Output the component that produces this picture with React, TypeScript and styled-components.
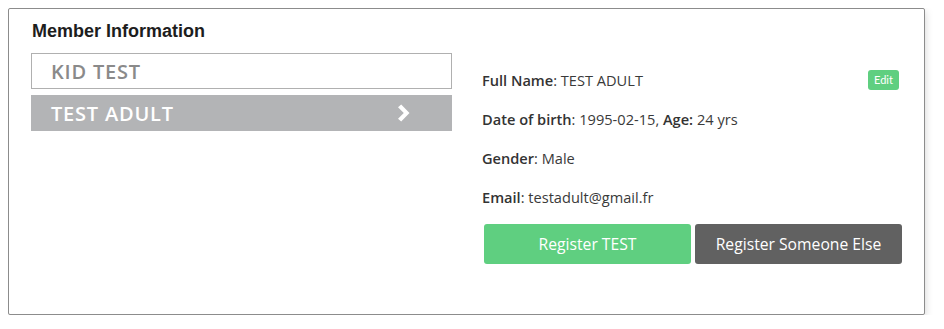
import React from "react"
import styled, { createGlobalStyle } from "styled-components"

const GlobalStyle = createGlobalStyle`
  body {
    margin: 8px;
    background: #fff;
    font-family: "Liberation Sans", Arial, sans-serif;
  }
`

const Card = styled.div`
  width: 917px;
  height: 307px;
  box-sizing: border-box;
  border: 1px solid #8c8c8c;
  border-radius: 2px;
  box-shadow: 0 3px 8px rgba(0, 0, 0, 0.18);
  padding: 12px 23px 0 22px;
  background: #fff;
`

const Title = styled.h2`
  margin: 0 0 11px 1px;
  font-size: 18px;
  line-height: 21px;
  font-weight: bold;
  color: #1d1d1d;
`

const Columns = styled.div`
  display: grid;
  grid-template-columns: 421px 1fr;
  column-gap: 30px;
`

const MemberList = styled.div`
  display: flex;
  flex-direction: column;
  gap: 6px;
`

const MemberItem = styled.div<{ $active?: boolean }>`
  height: 36px;
  box-sizing: border-box;
  display: flex;
  align-items: center;
  justify-content: space-between;
  padding: 0 40px 0 19px;
  font-family: "Open Sans", sans-serif;
  font-weight: 600;
  font-size: 20px;
  letter-spacing: 0.8px;
  border: 1px solid ${p => (p.$active ? "#b3b4b6" : "#b0b0b0")};
  background: ${p => (p.$active ? "#b3b4b6" : "#fff")};
  color: ${p => (p.$active ? "#fff" : "#8a8a8a")};
`

const Chevron = () => (
  <svg width="15" height="18" viewBox="0 0 15 18">
    <path d="M2 3.2 L5.2 0.5 L13.5 9 L5.2 17.5 L2 14.8 L7.8 9 Z" fill="#fff" />
  </svg>
)

const Details = styled.div`
  padding-top: 7px;
  font-family: "Open Sans", sans-serif;
  font-size: 14.6px;
  color: #3a3a3a;
`

const Row = styled.div`
  height: 39px;
  display: flex;
  align-items: center;
  justify-content: space-between;
  padding-right: 3px;
`

const Label = styled.b`
  font-weight: 600;
  color: #333;
`

const EditBadge = styled.span`
  display: inline-flex;
  align-items: center;
  justify-content: center;
  width: 31px;
  height: 20px;
  border-radius: 3px;
  background: #5fcf80;
  color: #fff;
  font-family: Lato, sans-serif;
  font-size: 11px;
`

const Actions = styled.div`
  display: flex;
  gap: 4px;
  margin-top: 8px;
  padding-left: 2px;
`

const Button = styled.button<{ $tone: "green" | "dark" }>`
  width: 207px;
  height: 40px;
  border: none;
  border-radius: 3px;
  background: ${p => (p.$tone === "green" ? "#5fcf80" : "#616161")};
  color: #fff;
  font-family: "Open Sans", sans-serif;
  font-size: 15.7px;
  cursor: pointer;
`

export default function App() {
  return (
    <>
      <GlobalStyle />
      <Card>
        <Title>Member Information</Title>
        <Columns>
          <MemberList>
            <MemberItem>KID TEST</MemberItem>
            <MemberItem $active>
              TEST ADULT
              <Chevron />
            </MemberItem>
          </MemberList>
          <Details>
            <Row>
              <span>
                <Label>Full Name</Label>: TEST ADULT
              </span>
              <EditBadge>Edit</EditBadge>
            </Row>
            <Row>
              <span>
                <Label>Date of birth</Label>: 1995-02-15, <Label>Age:</Label> 24 yrs
              </span>
            </Row>
            <Row>
              <span>
                <Label>Gender</Label>: Male
              </span>
            </Row>
            <Row>
              <span>
                <Label>Email</Label>: testadult@gmail.fr
              </span>
            </Row>
            <Actions>
              <Button $tone="green">Register TEST</Button>
              <Button $tone="dark">Register Someone Else</Button>
            </Actions>
          </Details>
        </Columns>
      </Card>
    </>
  )
}
